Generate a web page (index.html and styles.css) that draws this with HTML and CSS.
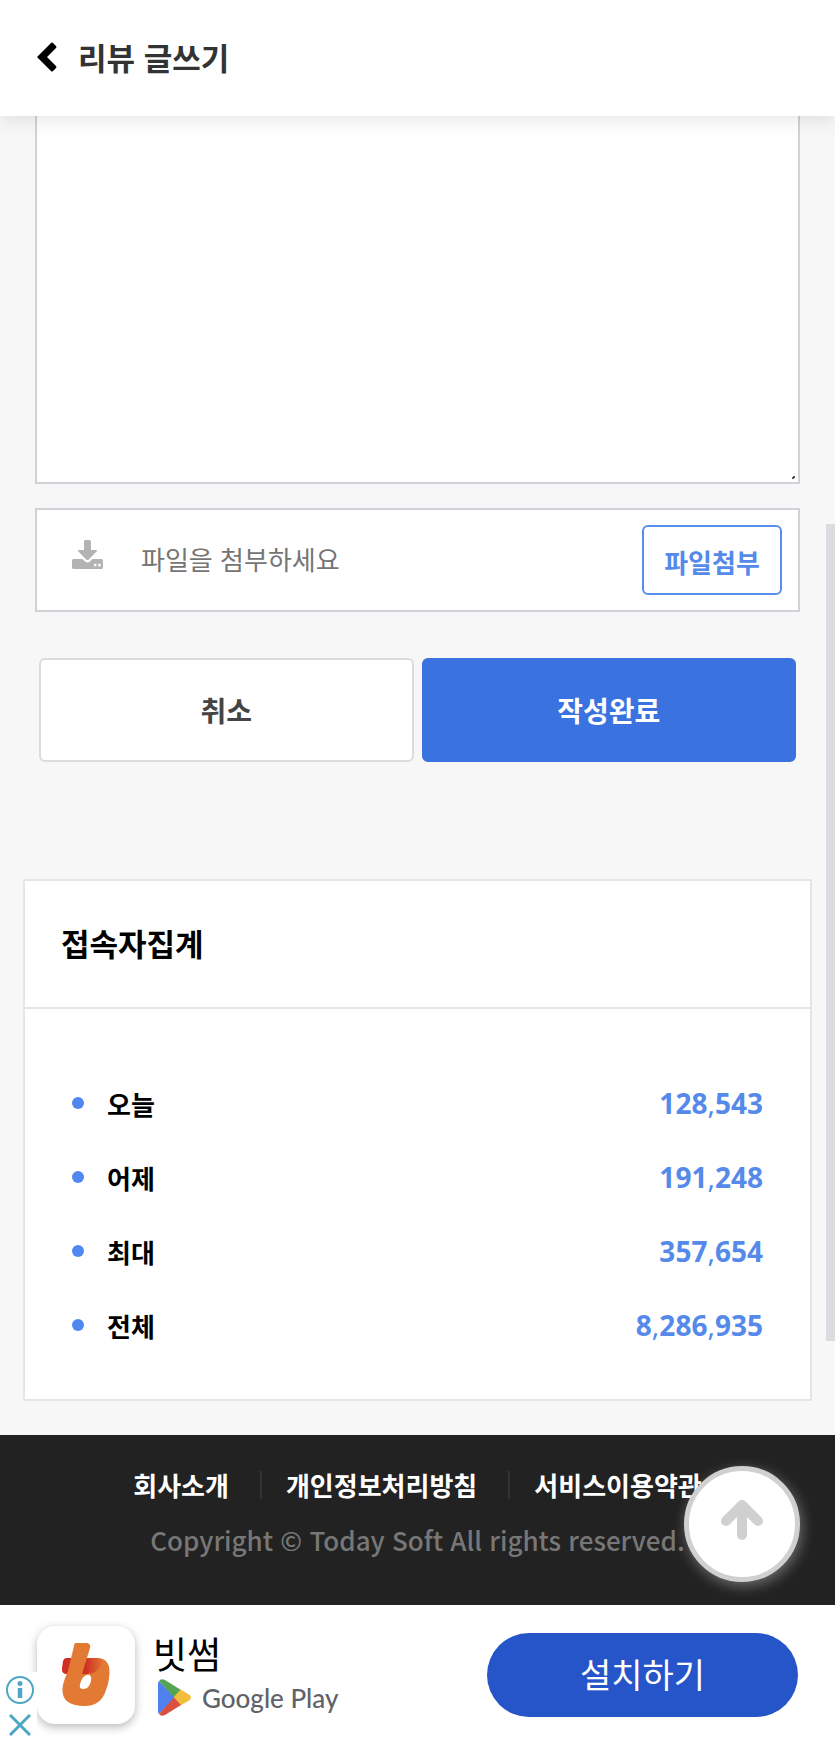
FILE: index.html
```html
<!DOCTYPE html>
<html lang="ko">
<head>
    <meta charset="UTF-8">
    <meta name="viewport" content="width=device-width, initial-scale=1.0">
    <title>리뷰 글쓰기</title>
    <link rel="stylesheet" href="styles.css">
</head>
<body>
    <header class="header">
        <a href="#" class="back" aria-label="뒤로">
            <svg width="20" height="30" viewBox="0 0 20 30"><path d="M0 15 L14 1 Q15 0 16 1 L19 4 Q20 5 19 6 L10 15 L19 24 Q20 25 19 26 L16 29 Q15 30 14 29 Z" fill="#000"/></svg>
        </a>
        <h1>리뷰 글쓰기</h1>
    </header>

    <main>
        <form class="write-form">
            <textarea class="content" aria-label="내용"></textarea>

            <div class="file-box">
                <svg class="file-icon" width="31" height="29" viewBox="0 0 31 29">
                    <path d="M12 1.500 Q12 0 13.500 0 H17.500 Q19 0 19 1.500 V10 H24 Q26 10 24.600 11.600 L16.800 19.500 Q15.500 20.700 14.200 19.500 L6.400 11.600 Q5 10 7 10 H12 Z" fill="#b3b3b3"/>
                    <path fill-rule="evenodd" d="M1.500 19 H10.500 L13 21.500 Q15.500 23.500 18 21.500 L20.500 19 H29.500 Q31 19 31 20.500 V27.500 Q31 29 29.500 29 H1.500 Q0 29 0 27.500 V20.500 Q0 19 1.500 19 Z M22 23.800 V26.200 H24.400 V23.800 Z M26.300 23.800 V26.200 H28.700 V23.800 Z" fill="#b3b3b3"/>
                </svg>
                <input type="text" class="file-name" placeholder="파일을 첨부하세요" aria-label="첨부파일" readonly>
                <button type="button" class="file-button">파일첨부</button>
            </div>

            <div class="form-buttons">
                <button type="button" class="cancel">취소</button>
                <button type="submit" class="submit">작성완료</button>
            </div>
        </form>

        <section class="visit">
            <h2>접속자집계</h2>
            <dl>
                <div class="visit-row"><dt>오늘</dt><dd>128<span>,</span>543</dd></div>
                <div class="visit-row"><dt>어제</dt><dd>191<span>,</span>248</dd></div>
                <div class="visit-row"><dt>최대</dt><dd>357<span>,</span>654</dd></div>
                <div class="visit-row"><dt>전체</dt><dd>8<span>,</span>286<span>,</span>935</dd></div>
            </dl>
        </section>
    </main>

    <footer class="footer">
        <nav class="footer-links">
            <a href="#">회사소개</a>
            <a href="#">개인정보처리방침</a>
            <a href="#">서비스이용약관</a>
        </nav>
        <p>Copyright © Today Soft All rights reserved.</p>
        <button type="button" class="top-button" aria-label="맨 위로">
            <svg width="44" height="42" viewBox="0 0 44 42"><path d="M22 7 V36 M6 22 L22 6 L38 22" fill="none" stroke="#d0d0d0" stroke-width="10" stroke-linecap="round" stroke-linejoin="round"/></svg>
        </button>
    </footer>

    <aside class="ad">
        <div class="ad-icon">
            <svg width="48" height="64" viewBox="0 0 48 64">
                <defs>
                    <linearGradient id="swoosh" x1="0" x2="1" y1="0" y2="0">
                        <stop offset="0.5" stop-color="#cf2f24"/>
                        <stop offset="0.9" stop-color="#e37a33"/>
                    </linearGradient>
                </defs>
                <path d="M4 15 H37 Q45 16 47 24 L40 35 Q33 30 25 31 H3 Q-1 29 0 25 L1 18 Q2 15 4 15 Z" fill="url(#swoosh)"/>
                <path fill-rule="evenodd" d="M14 0 H25 Q29 1 28 5 L20 31 H29 Q38 27 42 17 Q48 21 47.500 30 Q47 40 44 47 Q39 63 23 63 Q-3 63 1 42 Q2 37 6 28 L12 3 Q12 0 14 0 Z M25 32 Q20 33 18 41 Q17 46 21 46 Q25 46 27 43 Q30 38 29 34 Q28 31 25 32 Z" fill="#e37a33"/>
            </svg>
        </div>
        <div class="ad-info">
            <strong>빗썸</strong>
            <div class="store">
                <svg width="33" height="37" viewBox="0 0 33 37">
                    <path d="M1 2 L17 18.500 L1 35 Q0 34 0 32 V5 Q0 3 1 2 Z" fill="#4f80ee"/>
                    <path d="M1 2 Q3 -1 7 1 L23 11 L16 18.500 Z" fill="#53a551"/>
                    <path d="M22.500 10.500 L31 15.500 Q35 18.500 31 21.500 L22.500 26.500 L15.500 18.500 Z" fill="#f2bd3a"/>
                    <path d="M1 35 Q3 38 7 36 L23 26 L16 18.500 Z" fill="#d95040"/>
                </svg>
                <span>Google Play</span>
            </div>
        </div>
        <a href="#" class="install">설치하기</a>
        <div class="ad-choices">
            <button type="button" aria-label="광고 정보">
                <svg width="28" height="28" viewBox="0 0 28 28"><circle cx="14" cy="14" r="13" fill="none" stroke="#4fa6c4" stroke-width="2"/><circle cx="14" cy="7.500" r="2.500" fill="#4fa6c4"/><path d="M14 12 V22" stroke="#4fa6c4" stroke-width="4.500"/></svg>
            </button>
            <button type="button" aria-label="광고 닫기">
                <svg width="22" height="22" viewBox="0 0 22 22"><path d="M1 1 L21 21 M21 1 L1 21" stroke="#4fa6c4" stroke-width="3"/></svg>
            </button>
        </div>
    </aside>

    <div class="scroll-thumb"></div>
</body>
</html>
```

FILE: styles.css
```css
* {
    box-sizing: border-box;
}

body {
    position: relative;
    margin: 0;
    font-family: "Noto Sans CJK KR", sans-serif;
    background-color: #f7f7f7;
    color: #000;
}

h1, h2, p, dl, dd {
    margin: 0;
}

a {
    color: inherit;
    text-decoration: none;
}

button, input {
    font-family: inherit;
}

button {
    padding: 0;
    cursor: pointer;
}

svg {
    display: block;
}

.header {
    position: relative;
    z-index: 2;
    display: flex;
    align-items: center;
    gap: 21px;
    height: 116px;
    padding: 0 37px 3px;
    background-color: #fff;
    box-shadow: 0 2px 20px rgba(0, 0, 0, 0.12);
}

h1 {
    font-size: 31px;
    line-height: 44px;
    color: #333;
}

/* Write form */
.write-form {
    padding: 0 35px;
}

.content {
    display: block;
    width: 100%;
    height: 368px;
    border: 2px solid #cfd2d6;
    border-top: 0;
    background: linear-gradient(135deg, transparent 30%, #555 30%, #555 70%, transparent 70%) right 3px bottom 3px / 3px 3px no-repeat #fff;
    resize: none;
}

.file-box {
    display: flex;
    align-items: center;
    height: 104px;
    margin-top: 24px;
    padding: 0 16px 0 35px;
    border: 2px solid #cfd2d6;
    background-color: #fff;
}

.file-icon {
    margin-bottom: 12px;
}

.file-name {
    flex: 1;
    min-width: 0;
    height: 60px;
    margin-left: 38px;
    padding: 0 0 4px;
    border: 0;
    outline: 0;
    font-size: 26px;
}

.file-name::placeholder {
    color: #757575;
}

.file-button {
    width: 140px;
    height: 70px;
    padding-top: 2px;
    border: 2px solid #5b8eea;
    border-radius: 6px;
    background-color: #fff;
    color: #5589ea;
    font-size: 26px;
    font-weight: bold;
}

.form-buttons {
    display: flex;
    gap: 8px;
    margin-top: 46px;
    padding: 0 4px;
}

.form-buttons button {
    flex: 1;
    height: 104px;
    border: 2px solid #dcdcdc;
    border-radius: 6px;
    font-size: 28px;
    font-weight: bold;
}

.form-buttons .cancel {
    background-color: #fff;
    color: #444;
}

.form-buttons .submit {
    border-color: #3a72e0;
    background-color: #3a72e0;
    color: #fff;
}

/* Visitor counts */
.visit {
    margin: 117px 23px 34px;
    border: 2px solid #e2e6e7;
    background-color: #fff;
}

.visit h2 {
    padding: 40px 36px 42px;
    border-bottom: 2px solid #e2e6e7;
    font-size: 31px;
    line-height: 44px;
}

.visit dl {
    padding: 57px 47px 37px;
}

.visit-row {
    display: flex;
    align-items: center;
    justify-content: space-between;
    height: 74px;
}

.visit dt {
    display: flex;
    align-items: center;
    gap: 23px;
    font-size: 26px;
    font-weight: bold;
}

.visit dt::before {
    content: "";
    width: 12px;
    height: 12px;
    border-radius: 50%;
    background-color: #5087f0;
}

.visit dd {
    font-family: "Noto Sans", sans-serif;
    font-size: 28px;
    font-weight: bold;
    color: #5589ea;
}

.visit dd span {
    font-weight: normal;
}

/* Footer */
.footer {
    position: relative;
    height: 170px;
    padding-top: 31px;
    background-color: #222;
    text-align: center;
}

.footer-links {
    display: flex;
    justify-content: center;
    font-size: 26px;
    font-weight: bold;
    line-height: 38px;
    color: #fff;
}

.footer-links a {
    display: flex;
    align-items: center;
}

.footer-links a + a::before {
    content: "";
    width: 2px;
    height: 28px;
    margin: 0 24px 0 31px;
    background-color: #333;
}

.footer p {
    margin-top: 17px;
    font-size: 26px;
    font-weight: 500;
    line-height: 38px;
    color: #777;
}

.top-button {
    position: absolute;
    right: 35px;
    bottom: 23px;
    display: flex;
    align-items: center;
    justify-content: center;
    width: 116px;
    height: 116px;
    padding-bottom: 8px;
    border: 5px solid #d0d0d0;
    border-radius: 50%;
    background-color: #fff;
    box-shadow: 2px 4px 14px rgba(255, 255, 255, 0.35);
}

/* Ad banner */
.ad {
    position: relative;
    display: flex;
    align-items: center;
    height: 140px;
    padding: 0 37px 1px;
    background-color: #fff;
}

.ad-icon {
    display: flex;
    align-items: center;
    justify-content: center;
    width: 98px;
    height: 98px;
    border-radius: 18px;
    background-color: #fff;
    box-shadow: 0 3px 10px rgba(0, 0, 0, 0.28);
}

.ad-info {
    flex: 1;
    margin-left: 18px;
}

.ad-info strong {
    display: block;
    font-size: 37px;
    font-weight: normal;
    line-height: 46px;
}

.store {
    display: flex;
    align-items: center;
    gap: 11px;
    margin-left: 5px;
    font-family: Lato, sans-serif;
    font-size: 26px;
    font-weight: 500;
    line-height: 44px;
    color: #5f6368;
}

.install {
    width: 311px;
    height: 84px;
    border-radius: 42px;
    background-color: #2655ca;
    color: #fff;
    font-size: 34px;
    line-height: 82px;
    text-align: center;
}

.ad-choices {
    position: absolute;
    left: 0;
    bottom: 0;
    display: flex;
    flex-direction: column;
    align-items: center;
    gap: 10px;
    width: 37px;
    padding: 4px 0 9px 2px;
    background-color: #fff;
}

.ad-choices button {
    border: 0;
    background: none;
}

.scroll-thumb {
    position: absolute;
    top: 30%;
    right: 0;
    width: 9px;
    height: 817px;
    background-color: #dddbe0;
}
```
